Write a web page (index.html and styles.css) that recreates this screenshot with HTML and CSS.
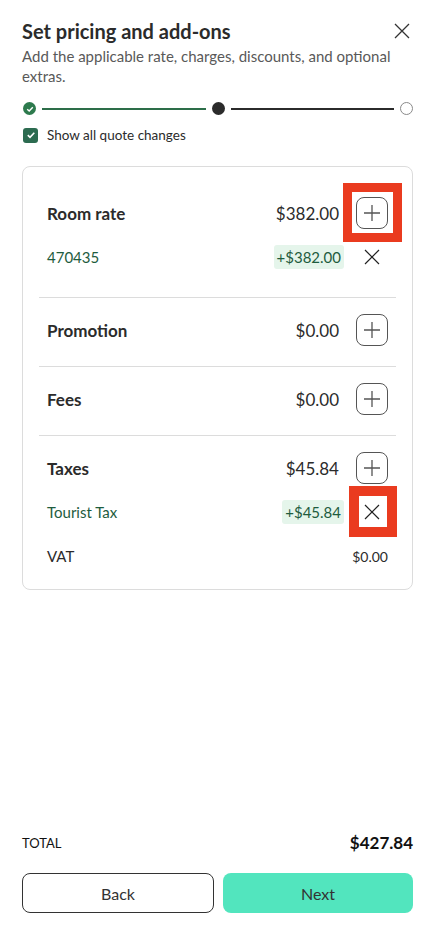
FILE: index.html
```html
<!DOCTYPE html>
<html lang="en">
<head>
  <meta charset="UTF-8">
  <title>Set pricing and add-ons</title>
  <link rel="stylesheet" href="styles.css">
</head>
<body>
  <div class="page">
    <div class="header">
      <h1>Set pricing and add-ons</h1>
      <button class="close" aria-label="Close">
        <svg width="16" height="16" viewBox="0 0 16 16"><path d="M1 1L15 15M15 1L1 15" stroke="#333" stroke-width="1.3" fill="none"/></svg>
      </button>
    </div>
    <p class="subtitle">Add the applicable rate, charges, discounts, and optional extras.</p>

    <div class="stepper">
      <span class="step done">
        <svg width="8" height="8" viewBox="0 0 8 8"><path d="M1.2 4.2L3.2 6L6.8 2.2" stroke="#fff" stroke-width="1.4" fill="none"/></svg>
      </span>
      <span class="line green"></span>
      <span class="step current"></span>
      <span class="line"></span>
      <span class="step next"></span>
    </div>

    <label class="show-changes">
      <span class="checkbox">
        <svg width="10" height="10" viewBox="0 0 10 10"><path d="M1.8 5.2L4 7.3L8.3 2.8" stroke="#fff" stroke-width="1.6" fill="none"/></svg>
      </span>
      Show all quote changes
    </label>

    <div class="card">
      <div class="section room">
        <div class="row">
          <span class="label">Room rate</span>
          <span class="amount">$382.00</span>
          <span class="slot"><button class="add"><svg width="18" height="18" viewBox="0 0 18 18"><path d="M9 1V17M1 9H17" stroke="#555" stroke-width="1.3"/></svg></button><span class="mark"></span></span>
        </div>
        <div class="row sub">
          <span class="label">470435</span>
          <span class="badge">+$382.00</span>
          <span class="slot"><button class="remove"><svg width="16" height="16" viewBox="0 0 16 16"><path d="M1 1L15 15M15 1L1 15" stroke="#222" stroke-width="1.2" fill="none"/></svg></button></span>
        </div>
      </div>

      <div class="section">
        <div class="row">
          <span class="label">Promotion</span>
          <span class="amount">$0.00</span>
          <span class="slot"><button class="add"><svg width="18" height="18" viewBox="0 0 18 18"><path d="M9 1V17M1 9H17" stroke="#555" stroke-width="1.3"/></svg></button></span>
        </div>
      </div>

      <div class="section">
        <div class="row">
          <span class="label">Fees</span>
          <span class="amount">$0.00</span>
          <span class="slot"><button class="add"><svg width="18" height="18" viewBox="0 0 18 18"><path d="M9 1V17M1 9H17" stroke="#555" stroke-width="1.3"/></svg></button></span>
        </div>
      </div>

      <div class="section last">
        <div class="row">
          <span class="label">Taxes</span>
          <span class="amount">$45.84</span>
          <span class="slot"><button class="add"><svg width="18" height="18" viewBox="0 0 18 18"><path d="M9 1V17M1 9H17" stroke="#555" stroke-width="1.3"/></svg></button></span>
        </div>
        <div class="row sub">
          <span class="label">Tourist Tax</span>
          <span class="badge">+$45.84</span>
          <span class="slot"><button class="remove"><svg width="16" height="16" viewBox="0 0 16 16"><path d="M1 1L15 15M15 1L1 15" stroke="#222" stroke-width="1.2" fill="none"/></svg></button><span class="mark small"></span></span>
        </div>
        <div class="row plain">
          <span class="label">VAT</span>
          <span class="amount">$0.00</span>
        </div>
      </div>
    </div>

    <div class="footer">
      <div class="total">
        <span class="total-label">TOTAL</span>
        <span class="total-amount">$427.84</span>
      </div>
      <div class="actions">
        <button class="btn back">Back</button>
        <button class="btn next-btn">Next</button>
      </div>
    </div>
  </div>
</body>
</html>
```

FILE: styles.css
```css
* {
  box-sizing: border-box;
}
body {
  margin: 0;
  font-family: Lato, 'Noto Sans', sans-serif;
  color: #2b2b2b;
  background: #fff;
}
button {
  font-family: inherit;
  background: none;
  border: none;
  padding: 0;
  cursor: pointer;
}
.page {
  height: 927px;
  padding: 18px 19px 14px 22px;
  display: flex;
  flex-direction: column;
}
.header {
  display: flex;
  justify-content: space-between;
  align-items: center;
}
.header h1 {
  margin: 0;
  font-size: 20px;
  font-weight: 700;
  line-height: 26px;
  color: #2b2b2b;
}
.close {
  width: 16px;
  height: 16px;
  margin-right: 3px;
  display: flex;
}
.subtitle {
  margin: 2px 0 0;
  font-size: 15px;
  line-height: 20px;
  color: #595959;
}
.stepper {
  display: flex;
  align-items: center;
  gap: 6px;
  margin-top: 16px;
  padding-left: 1px;
}
.step {
  width: 13px;
  height: 13px;
  border-radius: 50%;
  flex-shrink: 0;
  display: flex;
  align-items: center;
  justify-content: center;
}
.step.done {
  background: #2d7a4d;
}
.step.current {
  background: #2b2b2b;
}
.step.next {
  border: 1.5px solid #8a8a8a;
}
.line {
  flex: 1;
  height: 2px;
  background: #2b2b2b;
}
.line.green {
  background: #2d6e49;
}
.show-changes {
  display: flex;
  align-items: center;
  gap: 9px;
  margin-top: 12px;
  padding-left: 1px;
  font-size: 13.5px;
  color: #2b2b2b;
}
.checkbox {
  width: 15px;
  height: 15px;
  border-radius: 3px;
  background: #2c6b50;
  display: flex;
  align-items: center;
  justify-content: center;
}
.card {
  margin-top: 23px;
  border: 1px solid #dcdcdc;
  border-radius: 8px;
  padding: 14px 16px 0;
}
.section {
  padding: 16px 8px 20px;
  border-bottom: 1px solid #dcdcdc;
  display: flex;
  flex-direction: column;
  gap: 12px;
}
.section.room {
  padding-bottom: 24px;
}
.section.last {
  border-bottom: none;
  padding-bottom: 17px;
}
.row {
  display: flex;
  align-items: center;
  height: 32px;
}
.label {
  flex: 1;
  font-size: 17px;
  font-weight: 700;
}
.amount {
  font-size: 17px;
  margin-right: 17px;
}
.sub .label {
  font-weight: 400;
  font-size: 15px;
  color: #1e5c3e;
}
.badge {
  font-size: 15px;
  color: #1e5c3e;
  background: #e5f5eb;
  border-radius: 3px;
  padding: 3px 3px;
  margin-right: 12px;
}
.plain .label {
  font-weight: 400;
  font-size: 15px;
}
.plain .amount {
  font-size: 14px;
  margin-right: 0;
}
.slot {
  position: relative;
  width: 32px;
  height: 32px;
  display: flex;
  align-items: center;
  justify-content: center;
}
.add {
  width: 32px;
  height: 32px;
  border: 1px solid #555;
  border-radius: 8px;
  display: flex;
  align-items: center;
  justify-content: center;
}
.remove {
  width: 28px;
  height: 32px;
  display: flex;
  align-items: center;
  justify-content: center;
}
.mark {
  position: absolute;
  top: -14px;
  bottom: -13px;
  left: -13px;
  right: -14px;
  border: 9px solid #ea3b1f;
  pointer-events: none;
}
.mark.small {
  top: -10px;
  bottom: -9px;
  left: -7px;
  right: -9px;
  border-width: 10px;
}
.footer {
  margin-top: auto;
}
.total {
  display: flex;
  justify-content: space-between;
  align-items: center;
}
.total-label {
  font-size: 13px;
  color: #111;
}
.total-amount {
  font-size: 17px;
  font-weight: 700;
  color: #111;
}
.actions {
  display: flex;
  gap: 9px;
  margin-top: 20px;
}
.btn {
  flex: 1;
  height: 40px;
  border-radius: 8px;
  font-size: 16px;
  color: #333;
}
.back {
  border: 1px solid #333;
  background: #fff;
}
.next-btn {
  background: #52e5be;
}
```
